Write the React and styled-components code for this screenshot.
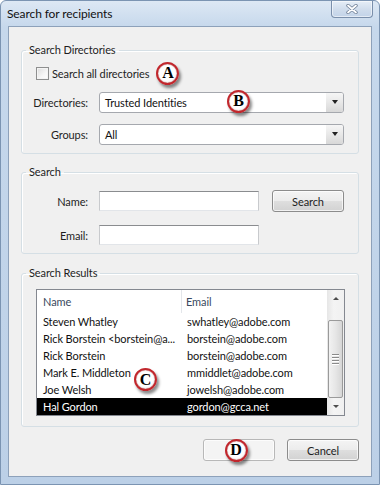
import React from 'react';
import styled, { createGlobalStyle } from 'styled-components';

const GlobalStyle = createGlobalStyle`
  html, body {
    margin: 0;
    padding: 0;
    background: #ffffff;
  }
  body {
    font-family: Lato, "Noto Sans", sans-serif;
    font-size: 11px;
    letter-spacing: -0.1px;
    color: #1e1e1e;
  }
`;

const Window = styled.div`
  width: 380px;
  height: 485px;
  box-sizing: border-box;
  display: flex;
  flex-direction: column;
  border: 1px solid #7b94b2;
  border-radius: 6px 6px 0 0;
  background: linear-gradient(180deg, #dde8f4 0px, #c6d8ec 26px, #bcd0e7 100%);
`;

const TitleBar = styled.div`
  height: 25px;
  display: flex;
  justify-content: space-between;
  align-items: flex-start;
  padding-left: 6px;
`;

const Title = styled.span`
  font-size: 12px;
  line-height: 25px;
  color: #111;
`;

const CloseButton = styled.div`
  width: 40px;
  height: 16px;
  margin-right: 6px;
  display: flex;
  align-items: center;
  justify-content: center;
  border: 1px solid #7a8fab;
  border-top: none;
  border-radius: 0 0 4px 4px;
  background: linear-gradient(180deg, #e6eef7 0%, #cfdcec 55%, #c2d3e8 100%);
  box-shadow: inset 0 0 0 1px rgba(255, 255, 255, 0.55);
`;

const Client = styled.div`
  flex: 1;
  margin: 0 7px 7px 7px;
  border: 1px solid #8da1ba;
  background: #f0f0f0;
  padding: 16px 12px 0 12px;
  display: flex;
  flex-direction: column;
`;

const Group = styled.fieldset`
  margin: ${p => p.$top || 0}px 0 0 0;
  padding: 0;
  border: 1px solid #d5dfe5;
  border-radius: 3px;
  box-shadow: inset 1px 1px 0 #ffffff;
`;

const Legend = styled.legend`
  margin-left: 4px;
  padding: 0 3px;
  line-height: 14px;
  color: #1e1e1e;
`;

const GroupBody = styled.div`
  display: flex;
  flex-direction: column;
  padding: ${p => p.$pad};
`;

const CheckRow = styled.label`
  display: flex;
  align-items: center;
  height: 18px;
  margin-left: 14px;
  gap: 3px;
`;

const CheckBox = styled.span`
  width: 11px;
  height: 11px;
  border: 1px solid #8e8f8f;
  background: linear-gradient(135deg, #dcdcdc 0%, #f6f6f6 60%, #ffffff 100%);
  box-shadow: inset 0 0 0 1px #f4f4f4;
`;

const FormRow = styled.div`
  display: flex;
  align-items: center;
  height: 22px;
  margin-top: ${p => p.$top || 0}px;
`;

const FieldLabel = styled.span`
  width: 66px;
  margin-right: 11px;
  text-align: right;
  color: #1e1e1e;
`;

const Select = styled.div`
  position: relative;
  width: 245px;
  height: 21px;
  box-sizing: border-box;
  display: flex;
  align-items: center;
  border: 1px solid #a5a8ae;
  border-radius: 3px;
  background: #ffffff;
  padding-left: 5px;
`;

const SelectText = styled.span`
  flex: 1;
  color: #111;
`;

const DropArrow = styled.span`
  width: 17px;
  align-self: stretch;
  display: flex;
  align-items: center;
  justify-content: center;
  border-radius: 0 2px 2px 0;
  background: linear-gradient(180deg, #f6f6f6 0%, #e8e8e8 50%, #d8d8d8 100%);

  &::after {
    content: '';
    border-left: 3px solid transparent;
    border-right: 3px solid transparent;
    border-top: 4px solid #222;
  }
`;

const TextInput = styled.div`
  width: 160px;
  height: 20px;
  box-sizing: border-box;
  background: #ffffff;
  border: 1px solid;
  border-color: #8a8c8f #c8cacd #e2e5e9 #c8cacd;
`;

const Button = styled.div`
  width: 72px;
  height: 22px;
  box-sizing: border-box;
  margin-left: ${p => p.$left || 0}px;
  display: flex;
  align-items: center;
  justify-content: center;
  border: 1px solid ${p => (p.$faint ? '#b8b8b8' : '#8c8c8c')};
  border-radius: 3px;
  background: ${p =>
    p.$faint
      ? '#f4f4f4'
      : 'linear-gradient(180deg, #f4f4f4 0%, #ececec 48%, #dedede 52%, #d2d2d2 100%)'};
  box-shadow: inset 0 0 0 1px rgba(255, 255, 255, 0.7);
  color: #1e1e1e;
  overflow: visible;
`;

const List = styled.div`
  position: relative;
  height: 127px;
  box-sizing: border-box;
  display: flex;
  border: 1px solid #848890;
  background: #ffffff;
  margin-left: 14px;
`;

const ListMain = styled.div`
  flex: 1;
  display: flex;
  flex-direction: column;
  min-width: 0;
`;

const HeaderRow = styled.div`
  height: 23px;
  display: grid;
  grid-template-columns: 145px 1fr;
  align-items: stretch;
  color: #3a4a60;
`;

const HeaderCell = styled.div`
  display: flex;
  align-items: center;
  padding-left: ${p => p.$pad}px;
  border-right: ${p => (p.$divider ? '1px solid #e3e6ea' : 'none')};
`;

const Row = styled.div`
  height: 17px;
  display: grid;
  grid-template-columns: 145px 1fr;
  align-items: center;
  background: ${p => (p.$selected ? '#000000' : 'transparent')};
  color: ${p => (p.$selected ? '#ffffff' : '#111111')};
`;

const Cell = styled.span`
  padding-left: ${p => p.$pad}px;
  white-space: nowrap;
  overflow: hidden;
`;

const ScrollBar = styled.div`
  width: 17px;
  display: flex;
  flex-direction: column;
  background: linear-gradient(90deg, #e6e6e6 0%, #f4f4f4 40%, #f0f0f0 100%);
`;

const ScrollArrow = styled.div`
  height: 17px;
  display: flex;
  align-items: center;
  justify-content: center;
  margin-top: ${p => (p.$down ? 'auto' : '0')};

  &::after {
    content: '';
    border-left: 3px solid transparent;
    border-right: 3px solid transparent;
    ${p =>
      p.$down ? 'border-top: 3px solid #4d4d4d;' : 'border-bottom: 3px solid #4d4d4d;'}
  }
`;

const Thumb = styled.div`
  margin: 13px 1px 0 1px;
  height: 80px;
  box-sizing: border-box;
  border: 1px solid #9a9a9a;
  border-radius: 2px;
  background: linear-gradient(90deg, #f2f2f2 0%, #e6e6e6 50%, #d6d6d6 100%);
  display: flex;
  flex-direction: column;
  align-items: center;
  justify-content: center;
  gap: 2px;
`;

const Grip = styled.span`
  width: 7px;
  height: 1px;
  background: #8a8a8a;
  box-shadow: 0 1px 0 #ffffff;
`;

const ButtonRow = styled.div`
  display: flex;
  justify-content: flex-end;
  margin-top: 12px;
  gap: 12px;
`;

const Callout = styled.span`
  width: 23px;
  height: 23px;
  box-sizing: border-box;
  flex: none;
  display: inline-flex;
  align-items: center;
  justify-content: center;
  border-radius: 50%;
  border: 2px solid #c1272d;
  background: radial-gradient(circle at 45% 40%, #ffffff 55%, #f1e4e4 100%);
  box-shadow: 2px 3px 3px rgba(0, 0, 0, 0.45), inset 0 0 1px #7a1010;
  font-family: "Liberation Serif", "DejaVu Serif", serif;
  font-weight: bold;
  font-size: 16px;
  letter-spacing: 0;
  line-height: 1;
  color: #000;
  margin-left: ${p => p.$left || 0}px;
  margin-right: ${p => p.$right || 0}px;
`;

const FloatingCallout = styled(Callout)`
  position: absolute;
  left: ${p => p.$x}px;
  top: ${p => p.$y}px;
  margin: 0;
`;

const results = [
  { name: 'Steven Whatley', email: 'swhatley@adobe.com' },
  { name: 'Rick Borstein <borstein@a...', email: 'borstein@adobe.com' },
  { name: 'Rick Borstein', email: 'borstein@adobe.com' },
  { name: 'Mark E. Middleton', email: 'mmiddlet@adobe.com' },
  { name: 'Joe Welsh', email: 'jowelsh@adobe.com' },
  { name: 'Hal Gordon', email: 'gordon@gcca.net', selected: true },
];

const CloseGlyph = () => (
  <svg width="12" height="10" viewBox="0 0 12 10">
    <path d="M2 1.5 L10 8.5 M10 1.5 L2 8.5" stroke="#6e7f96" strokeWidth="3.4" strokeLinecap="round" />
    <path d="M2 1.5 L10 8.5 M10 1.5 L2 8.5" stroke="#ffffff" strokeWidth="1.8" strokeLinecap="round" />
  </svg>
);

const App = () => {
  return (
    <>
      <GlobalStyle />
      <Window>
        <TitleBar>
          <Title>Search for recipients</Title>
          <CloseButton>
            <CloseGlyph />
          </CloseButton>
        </TitleBar>
        <Client>
          <Group>
            <Legend>Search Directories</Legend>
            <GroupBody $pad="7px 13px 8px 0">
              <CheckRow>
                <CheckBox />
                <span>Search all directories</span>
                <Callout $left={4}>A</Callout>
              </CheckRow>
              <FormRow $top={9}>
                <FieldLabel>Directories:</FieldLabel>
                <Select>
                  <SelectText>Trusted Identities</SelectText>
                  <DropArrow />
                  <FloatingCallout $x={127} $y={-3}>B</FloatingCallout>
                </Select>
              </FormRow>
              <FormRow $top={10}>
                <FieldLabel>Groups:</FieldLabel>
                <Select>
                  <SelectText>All</SelectText>
                  <DropArrow />
                </Select>
              </FormRow>
            </GroupBody>
          </Group>

          <Group $top={11}>
            <Legend>Search</Legend>
            <GroupBody $pad="11px 13px 7px 0">
              <FormRow>
                <FieldLabel>Name:</FieldLabel>
                <TextInput />
                <Button $left={13}>Search</Button>
              </FormRow>
              <FormRow $top={12}>
                <FieldLabel>Email:</FieldLabel>
                <TextInput />
              </FormRow>
            </GroupBody>
          </Group>

          <Group $top={12}>
            <Legend>Search Results</Legend>
            <GroupBody $pad="9px 13px 10px 0">
              <List>
                <ListMain>
                  <HeaderRow>
                    <HeaderCell $pad={6} $divider>Name</HeaderCell>
                    <HeaderCell $pad={4}>Email</HeaderCell>
                  </HeaderRow>
                  {results.map(r => (
                    <Row key={r.name + r.email} $selected={r.selected}>
                      <Cell $pad={6}>{r.name}</Cell>
                      <Cell $pad={5}>{r.email}</Cell>
                    </Row>
                  ))}
                </ListMain>
                <ScrollBar>
                  <ScrollArrow />
                  <Thumb>
                    <Grip />
                    <Grip />
                    <Grip />
                    <Grip />
                  </Thumb>
                  <ScrollArrow $down />
                </ScrollBar>
                <FloatingCallout $x={97} $y={78}>C</FloatingCallout>
              </List>
            </GroupBody>
          </Group>

          <ButtonRow>
            <Button $faint>
              <Callout $right={6}>D</Callout>
            </Button>
            <Button>Cancel</Button>
          </ButtonRow>
        </Client>
      </Window>
    </>
  );
};

export default App;
